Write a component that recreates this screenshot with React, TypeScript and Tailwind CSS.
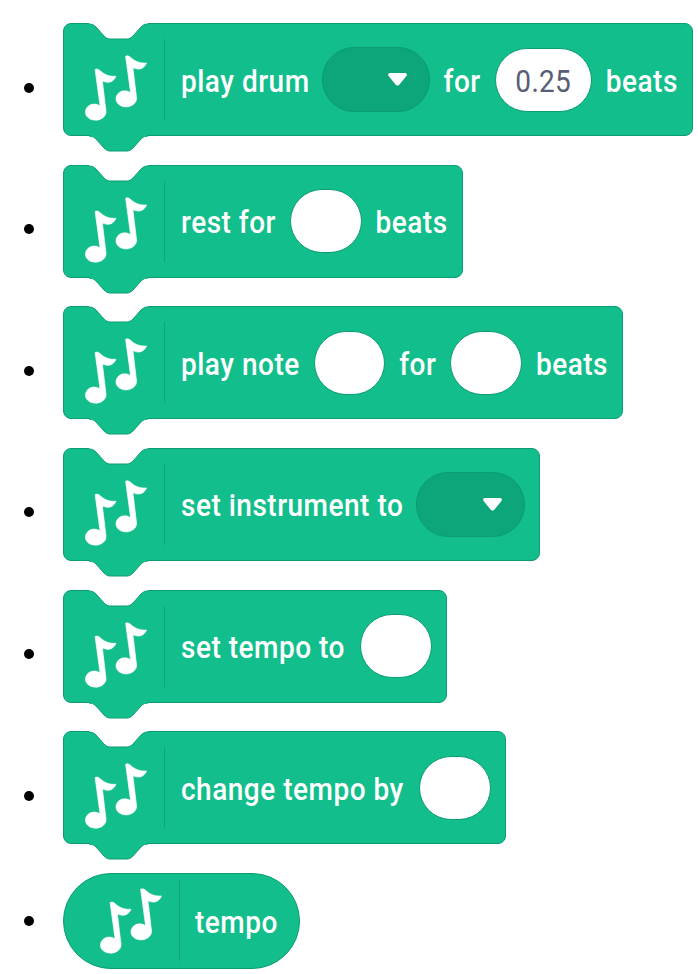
const NOTE = "M285 206C290 203 296 205 302 211C315 222 330 228 348 226C342 242 325 250 307 240L318 332C319 350 297 361 281 358C263 356 251 341 258 325C265 310 285 305 300 316Z";

function Notes({ className }: { className: string }) {
  return (
    <svg viewBox="240 150 210 220" width="70" height="73" fill="#fff" stroke="#fff" strokeWidth="2" strokeLinejoin="round" className={className} aria-hidden>
      <path d={NOTE} />
      <path d={NOTE} transform="translate(92 -40)" />
    </svg>
  );
}

const NOTCH = "M0 1C3 1 5 2 7 4L15 13C17 15 19 16 21 16L38 16C40 16 42 15 44 13L52 4C54 2 56 1 59 1";

function Field() {
  return <span className="h-16 w-[71.5px] shrink-0 rounded-[32px] border border-[#0c9c73] bg-white last:ml-px last:w-[72.5px]" />;
}

function ValueField({ value }: { value: string }) {
  return (
    <span className="flex h-16 w-[97px] shrink-0 items-center justify-center rounded-[32px] border border-[#0c9c73] bg-white font-normal tracking-[0.3px] text-[#575e75]">
      <Label>{value}</Label>
    </span>
  );
}

function Dropdown() {
  return (
    <span className="-ml-[2px] flex h-[65px] w-[108px] shrink-0 items-center justify-end rounded-[32px] border border-[#0c9c73] bg-[#0da57a] pr-[22px] last:-ml-px last:w-[109px]">
      <svg viewBox="0 0 19 13" width="19" height="13" fill="#fff" aria-hidden>
        <path d="M2 0H17C19 0 19.500 2 18 3.500L11.500 11.500C10.500 13 8.500 13 7.500 11.500L1 3.500C-0.500 2 0 0 2 0Z" />
      </svg>
    </span>
  );
}

// the type in the picture is a little stretched vertically
function Label({ children }: { children: React.ReactNode }) {
  return <span className="mt-1 inline-block scale-y-110">{children}</span>;
}

function Stack({ children }: { children: React.ReactNode }) {
  return (
    <div className="relative mb-4 flex h-[113px] items-center gap-[14px] rounded-lg border border-[#0c9c73] bg-[#12be8b] pr-[14px] pl-4 text-[28px] font-medium tracking-[0.5px] text-white">
      {/* notch on top, bump underneath */}
      <svg viewBox="0 0 59 17" width="59" height="17" className="absolute -top-px left-[25px]" aria-hidden>
        <path d={`${NOTCH}V0H0Z`} fill="#fff" />
        <path d={NOTCH} fill="none" stroke="#0c9c73" />
      </svg>
      <svg viewBox="0 -1 59 18" width="59" height="18" className="absolute top-full left-[25px] -mt-px" aria-hidden>
        <path d={NOTCH} fill="#12be8b" stroke="#0c9c73" />
        <path d="M1 -1H58V2H1Z" fill="#12be8b" />
      </svg>
      <Notes className="mt-4 shrink-0" />
      <span className="mr-[2px] h-[81px] w-px shrink-0 bg-[#0da57a]" />
      {children}
    </div>
  );
}

function Item({ children }: { children: React.ReactNode }) {
  return (
    <li className="flex items-center">
      <span className="mr-[29px] size-2.5 shrink-0 rounded-full bg-black" />
      {children}
    </li>
  );
}

export default function App() {
  return (
    <ul className="flex min-h-[974px] flex-col items-start gap-[12.67px] bg-white pt-[23px] pl-6 font-['Roboto',sans-serif] whitespace-nowrap">
      <Item>
        <Stack>
          <Label>play drum</Label>
          <Dropdown />
          <Label>for</Label>
          <ValueField value="0.25" />
          <Label>beats</Label>
        </Stack>
      </Item>
      <Item>
        <Stack>
          <Label>rest for</Label>
          <Field />
          <Label>beats</Label>
        </Stack>
      </Item>
      <Item>
        <Stack>
          <Label>play note</Label>
          <Field />
          <Label>for</Label>
          <Field />
          <Label>beats</Label>
        </Stack>
      </Item>
      <Item>
        <Stack>
          <Label>set instrument to</Label>
          <Dropdown />
        </Stack>
      </Item>
      <Item>
        <Stack>
          <Label>set tempo to</Label>
          <Field />
        </Stack>
      </Item>
      <Item>
        <Stack>
          <Label>change tempo by</Label>
          <Field />
        </Stack>
      </Item>
      <Item>
        <div className="flex h-24 items-center gap-[14px] rounded-[48px] border border-[#0c9c73] bg-[#12be8b] pr-[21px] pl-[31px] text-[28px] font-medium tracking-[0.5px] text-white">
          <Notes className="shrink-0" />
          <span className="mr-px h-[81px] w-px shrink-0 bg-[#0da57a]" />
          <Label>tempo</Label>
        </div>
      </Item>
    </ul>
  );
}
